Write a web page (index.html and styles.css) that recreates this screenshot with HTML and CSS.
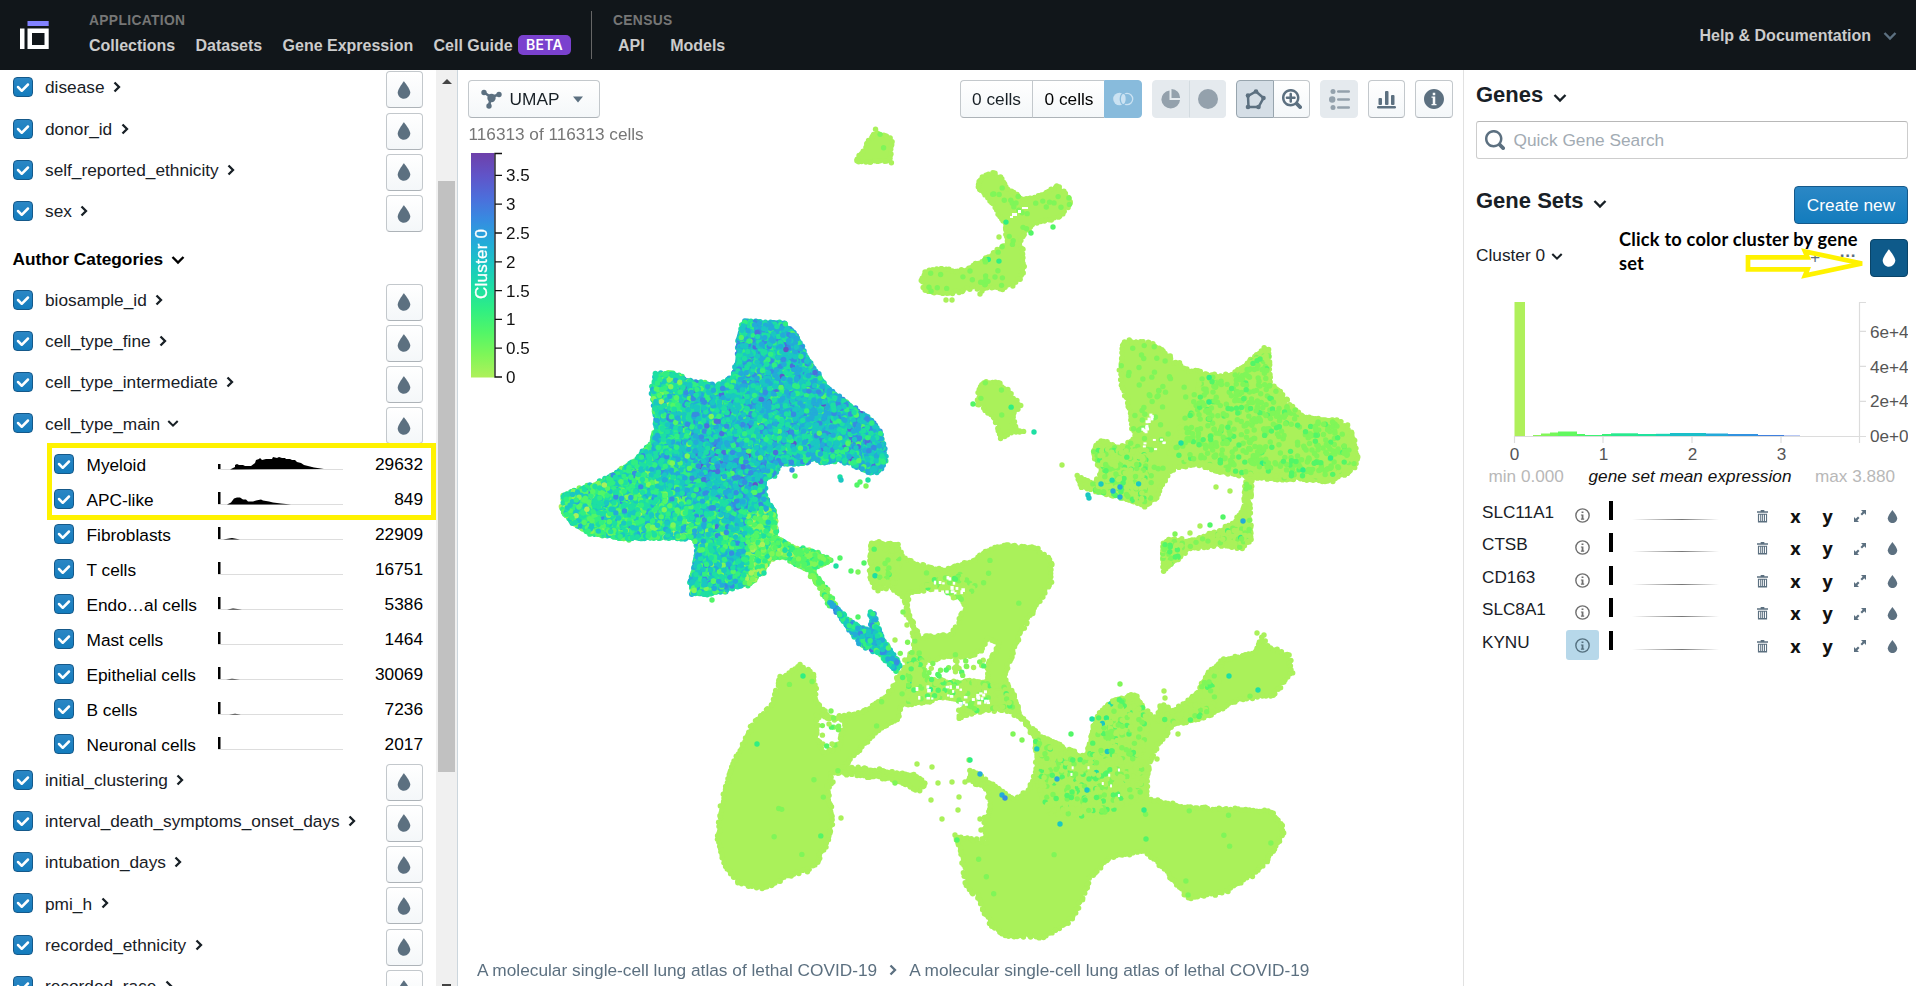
FILE: index.html
```html
<!DOCTYPE html>
<html lang="en">
<head>
<meta charset="utf-8">
<title>Cell explorer</title>
<link rel="stylesheet" href="styles.css">
</head>
<body>
<svg class="defs" aria-hidden="true">
  <symbol id="drop" viewBox="0 0 16 16"><path d="M7.88 1s-4.9 6.28-4.9 8.9c.01 2.82 2.34 5.1 4.99 5.1 2.65-.01 5.03-2.3 5.03-5.13C12.99 7.17 7.88 1 7.88 1z"/></symbol>
  <symbol id="tick" viewBox="0 0 16 16"><path d="M12 5c-.28 0-.53.11-.71.29L7 9.59l-2.29-2.3a1.003 1.003 0 00-1.42 1.42l3 3c.18.18.43.29.71.29s.53-.11.71-.29l5-5A1.003 1.003 0 0012 5z"/></symbol>
  <symbol id="right" viewBox="0 0 8 12"><path d="M1.5 1.5L6 6L1.5 10.5" fill="none" stroke="currentColor" stroke-width="2.3"/></symbol>
  <symbol id="down" viewBox="0 0 14 10"><path d="M1.5 2L7 7.5L12.500 2" fill="none" stroke="currentColor" stroke-width="2.4"/></symbol>
  <symbol id="lens" viewBox="0 0 16 16"><path d="M15.55 13.43l-2.67-2.68a6.94 6.94 0 001.11-3.76c0-3.87-3.13-7-7-7s-7 3.13-7 7 3.13 7 7 7c1.390 0 2.680-.42 3.760-1.110l2.680 2.670a1.498 1.498 0 102.120-2.120zm-8.560-1.440c-2.760 0-5-2.240-5-5s2.240-5 5-5 5 2.240 5 5-2.240 5-5 5z"/></symbol>
  <symbol id="info" viewBox="0 0 16 16"><circle cx="8" cy="8" r="7.1" fill="none" stroke="currentColor" stroke-width="1.5"/><path d="M7 3.600h2v1.700H7zM6.300 6.800H9v4.400h.8v1.200H6.300v-1.200h.8V8h-.8z"/></symbol>
  <symbol id="trash" viewBox="0 0 12 14"><path d="M4 0h4v1.300h4v1.500H0V1.300h4zM1 4h10v9.500H1zM2.300 5v7h1.200V5zM4.700 5v7h.9V5zM6.700 5v7h.9V5zM8.700 5v7h1.100V5z" fill-rule="evenodd"/></symbol>
  <symbol id="expand" viewBox="0 0 12 12"><path d="M7 0h5v5l-1.700-1.700L8 5.500 6.500 4l2.200-2.300zM5 12H0V7l1.700 1.700L4 6.500 5.500 8l-2.200 2.300z"/></symbol>
</svg>

<header class="topbar">
  <svg class="logo" width="29" height="28" viewBox="0 0 29 28"><path d="M7.500 0h21.200v5H7.500z" fill="#8282ff"/><path d="M0 7.500h4.500V28H0zM7.500 7.500h21.200V28H7.500zM12 12v12h12.500V12z" fill="#fff" fill-rule="evenodd"/></svg>
  <div class="navgroup">
    <div class="navtitle">APPLICATION</div>
    <nav class="nav"><a>Collections</a><a>Datasets</a><a>Gene Expression</a><a class="guide">Cell Guide</a><span class="beta">BETA</span></nav>
  </div>
  <div class="navgroup census">
    <div class="navtitle">CENSUS</div>
    <nav class="nav"><a>API</a><a>Models</a></nav>
  </div>
  <div class="help">Help &amp; Documentation<svg width="14" height="10"><use href="#down"/></svg></div>
</header>

<div class="body">
<aside class="left">
  <div class="cats">
    <div class="cat"><i class="box"><svg><use href="#tick"/></svg></i><b>disease</b><svg class="chev"><use href="#right"/></svg><span class="btn paint"><svg><use href="#drop"/></svg></span></div>
    <div class="cat"><i class="box"><svg><use href="#tick"/></svg></i><b>donor_id</b><svg class="chev"><use href="#right"/></svg><span class="btn paint"><svg><use href="#drop"/></svg></span></div>
    <div class="cat"><i class="box"><svg><use href="#tick"/></svg></i><b>self_reported_ethnicity</b><svg class="chev"><use href="#right"/></svg><span class="btn paint"><svg><use href="#drop"/></svg></span></div>
    <div class="cat"><i class="box"><svg><use href="#tick"/></svg></i><b>sex</b><svg class="chev"><use href="#right"/></svg><span class="btn paint"><svg><use href="#drop"/></svg></span></div>
    <h3>Author Categories<svg width="14" height="10"><use href="#down"/></svg></h3>
    <div class="cat"><i class="box"><svg><use href="#tick"/></svg></i><b>biosample_id</b><svg class="chev"><use href="#right"/></svg><span class="btn paint"><svg><use href="#drop"/></svg></span></div>
    <div class="cat"><i class="box"><svg><use href="#tick"/></svg></i><b>cell_type_fine</b><svg class="chev"><use href="#right"/></svg><span class="btn paint"><svg><use href="#drop"/></svg></span></div>
    <div class="cat"><i class="box"><svg><use href="#tick"/></svg></i><b>cell_type_intermediate</b><svg class="chev"><use href="#right"/></svg><span class="btn paint"><svg><use href="#drop"/></svg></span></div>
    <div class="cat"><i class="box"><svg><use href="#tick"/></svg></i><b>cell_type_main</b><svg class="chev open"><use href="#down"/></svg><span class="btn paint"><svg><use href="#drop"/></svg></span></div>
    <div class="values">
      <div class="val"><i class="box"><svg><use href="#tick"/></svg></i><span class="name">Myeloid</span><svg class="mini" viewBox="0 0 125 15"><path class="axis" d="M0 14.500H125"/><path d="M0 9h2.500v5H0zM12 14.500L17 12V10l2-1 2 1h4l2 1 6 0 4-3 1-3 3-1 1-1 2 2 4-1 6 0 1-2 4 1 2-1 3 1h3l1 1h4l2 1h3l2 2 4 1 3 2 4 1 6 1.500 10 1.500z"/></svg><span class="count">29632</span></div>
      <div class="val"><i class="box"><svg><use href="#tick"/></svg></i><span class="name">APC-like</span><svg class="mini" viewBox="0 0 125 15"><path class="axis" d="M0 14.500H125"/><path d="M0 2h2.500v12H0zM9 14.500l4-2 3-4 3-1 3 0 3 2h3l2 2 5 0 3-1 5-1 2 1 6 1 4 1 8 1 10 1z"/></svg><span class="count">849</span></div>
      <div class="val"><i class="box"><svg><use href="#tick"/></svg></i><span class="name">Fibroblasts</span><svg class="mini" viewBox="0 0 125 15"><path class="axis" d="M0 14.500H125"/><path d="M0 2h2.500v12H0zM5 14.500L14 13l8 1.500z"/></svg><span class="count">22909</span></div>
      <div class="val"><i class="box"><svg><use href="#tick"/></svg></i><span class="name">T cells</span><svg class="mini" viewBox="0 0 125 15"><path class="axis" d="M0 14.500H125"/><path d="M0 2h2.500v12H0z"/></svg><span class="count">16751</span></div>
      <div class="val"><i class="box"><svg><use href="#tick"/></svg></i><span class="name">Endo…al cells</span><svg class="mini" viewBox="0 0 125 15"><path class="axis" d="M0 14.500H125"/><path d="M0 2h2.500v12H0zM9 14.500L15 13.500l9 1z"/></svg><span class="count">5386</span></div>
      <div class="val"><i class="box"><svg><use href="#tick"/></svg></i><span class="name">Mast cells</span><svg class="mini" viewBox="0 0 125 15"><path class="axis" d="M0 14.500H125"/><path d="M0 2h2.500v12H0z"/></svg><span class="count">1464</span></div>
      <div class="val"><i class="box"><svg><use href="#tick"/></svg></i><span class="name">Epithelial cells</span><svg class="mini" viewBox="0 0 125 15"><path class="axis" d="M0 14.500H125"/><path d="M0 2h2.500v12H0zM8 14.500L14 13.800l8 .7z"/></svg><span class="count">30069</span></div>
      <div class="val"><i class="box"><svg><use href="#tick"/></svg></i><span class="name">B cells</span><svg class="mini" viewBox="0 0 125 15"><path class="axis" d="M0 14.500H125"/><path d="M0 2h2.500v12H0zM11 14.500L17 13.700l6 .8z"/></svg><span class="count">7236</span></div>
      <div class="val"><i class="box"><svg><use href="#tick"/></svg></i><span class="name">Neuronal cells</span><svg class="mini" viewBox="0 0 125 15"><path class="axis" d="M0 14.500H125"/><path d="M0 2h2.500v12H0z"/></svg><span class="count">2017</span></div>
      <div class="highlight"></div>
    </div>
    <div class="cat"><i class="box"><svg><use href="#tick"/></svg></i><b>initial_clustering</b><svg class="chev"><use href="#right"/></svg><span class="btn paint"><svg><use href="#drop"/></svg></span></div>
    <div class="cat"><i class="box"><svg><use href="#tick"/></svg></i><b>interval_death_symptoms_onset_days</b><svg class="chev"><use href="#right"/></svg><span class="btn paint"><svg><use href="#drop"/></svg></span></div>
    <div class="cat"><i class="box"><svg><use href="#tick"/></svg></i><b>intubation_days</b><svg class="chev"><use href="#right"/></svg><span class="btn paint"><svg><use href="#drop"/></svg></span></div>
    <div class="cat"><i class="box"><svg><use href="#tick"/></svg></i><b>pmi_h</b><svg class="chev"><use href="#right"/></svg><span class="btn paint"><svg><use href="#drop"/></svg></span></div>
    <div class="cat"><i class="box"><svg><use href="#tick"/></svg></i><b>recorded_ethnicity</b><svg class="chev"><use href="#right"/></svg><span class="btn paint"><svg><use href="#drop"/></svg></span></div>
    <div class="cat"><i class="box"><svg><use href="#tick"/></svg></i><b>recorded_race</b><svg class="chev"><use href="#right"/></svg><span class="btn paint"><svg><use href="#drop"/></svg></span></div>
  </div>
  <div class="scroll"><span class="up"></span><span class="thumb"></span><span class="dn"></span></div>
</aside>

<main class="center">
  <canvas id="plot" width="1004" height="916"></canvas>
  <div class="tools">
    <div class="btn umap"><svg width="21" height="20" viewBox="0 0 21 20"><path d="M3 3.500L10 8l8-2.500M10 8l-2 9" stroke="#5c7080" stroke-width="2.600" fill="none"/><g fill="#5c7080"><circle cx="3" cy="3.500" r="2.700"/><circle cx="18" cy="5.500" r="2.700"/><circle cx="10.500" cy="9" r="4.200"/><circle cx="8" cy="17" r="2.700"/></g></svg><span>UMAP</span><svg class="caret" width="10" height="7" viewBox="0 0 10 7"><path d="M0 .5h10L5 6.500z" fill="#5c7080"/></svg></div>
    <div class="toolset">
      <div class="group"><span class="btn cells">0 cells</span><span class="btn cells two">0 cells</span><span class="btn diff"><svg width="21" height="14" viewBox="0 0 21 14"><circle cx="6.500" cy="7" r="6.300" fill="#cbe2f2"/><circle cx="14" cy="7" r="5.700" fill="none" stroke="#cbe2f2" stroke-width="1.300"/><ellipse cx="10.300" cy="7" rx="3" ry="5.700" fill="#cbe2f2" stroke="#88bbdc" stroke-width="1.300"/></svg></span></div>
      <div class="group"><span class="btn off"><svg width="20" height="20" viewBox="0 0 20 20"><path d="M8.500 1.500V11H19A9.300 9 0 1 1 8.500 1.500zM10.500 0A8.800 8.500 0 0 1 19 9H10.500z"/></svg></span><span class="btn off"><svg width="20" height="20"><circle cx="10" cy="10" r="10"/></svg></span></div>
      <div class="group"><span class="btn on"><svg width="21" height="21" viewBox="0 0 21 21"><path d="M11 2.500L18.500 9 13.500 18H3.500L3 7z" fill="none" stroke="#5c7080" stroke-width="2.500"/><g><circle cx="11" cy="2.500" r="2.300"/><circle cx="18.500" cy="9" r="2.300"/><circle cx="13.500" cy="18" r="2.300"/><circle cx="3" cy="18" r="2.300"/><circle cx="3" cy="6.500" r="2.300"/></g></svg></span><span class="btn joined"><svg width="20" height="20" viewBox="0 0 16 16"><use href="#lens"/><path d="M7.990 5.990v-2c0-.55-.45-1-1-1s-1 .45-1 1v2h-2c-.55 0-1 .45-1 1s.45 1 1 1h2v2c0 .55.450 1 1 1s1-.45 1-1v-2h2c.55 0 1-.45 1-1s-.45-1-1-1h-2z"/></svg></span></div>
      <div class="group"><span class="btn off wide"><svg width="21" height="21" viewBox="0 0 21 21"><circle cx="4" cy="2.500" r="2.500"/><circle cx="3.200" cy="10.500" r="3.200"/><circle cx="4" cy="18.500" r="2.500"/><rect x="8" y="1.300" width="13" height="2.500" rx="1.200"/><rect x="8" y="9.300" width="13" height="2.500" rx="1.200"/><rect x="8" y="17.300" width="13" height="2.500" rx="1.200"/></svg></span></div>
      <div class="group"><span class="btn"><svg width="19" height="19" viewBox="0 0 19 19"><rect x="0" y="16" width="19" height="2.500" rx="1.200"/><rect x="1.500" y="8" width="3.500" height="7" rx="1"/><rect x="8" y="1" width="3.500" height="14" rx="1"/><rect x="14" y="5" width="3.500" height="10" rx="1"/></svg></span></div>
      <div class="group"><span class="btn wide"><svg width="20" height="20" viewBox="0 0 16 16"><path d="M8 0C3.580 0 0 3.580 0 8s3.580 8 8 8 8-3.580 8-8-3.580-8-8-8zM7 3h2v2H7V3zm3 10H6v-1h1V7H6V6h3v6h1v1z"/></svg></span></div>
    </div>
  </div>
  <div class="total">116313 of 116313 cells</div>
  <svg class="legend" width="80" height="246" viewBox="0 0 80 246">
    <defs><linearGradient id="cool" x1="0" y1="0" x2="0" y2="1"><stop offset="0" stop-color="#6e40aa"/><stop offset=".1" stop-color="#6054c8"/><stop offset=".2" stop-color="#4c6edb"/><stop offset=".3" stop-color="#368ce1"/><stop offset=".4" stop-color="#23abd8"/><stop offset=".5" stop-color="#1ac7c2"/><stop offset=".6" stop-color="#1ddfa3"/><stop offset=".7" stop-color="#30ef82"/><stop offset=".8" stop-color="#52f667"/><stop offset=".9" stop-color="#7ff658"/><stop offset="1" stop-color="#aff05b"/></linearGradient></defs>
    <rect x="0" y="10" width="23.500" height="224.500" fill="url(#cool)"/>
    <path d="M31 10.500H24V234H31M24 32.300h7M24 61.100h7M24 90h7M24 118.800h7M24 147.600h7M24 176.400h7M24 205.200h7" fill="none" stroke="#111" stroke-width="1.300"/>
    <text x="35" y="38">3.5</text><text x="35" y="67">3</text><text x="35" y="96">2.5</text><text x="35" y="124.500">2</text><text x="35" y="153.500">1.5</text><text x="35" y="182">1</text><text x="35" y="211">0.5</text><text x="35" y="240">0</text>
    <text class="ltitle" transform="translate(16 156) rotate(-90)" textLength="70">Cluster 0</text>
  </svg>
  <footer class="crumbs"><span>A molecular single-cell lung atlas of lethal COVID-19</span><svg class="chev"><use href="#right"/></svg><span>A molecular single-cell lung atlas of lethal COVID-19</span></footer>
</main>

<aside class="right">
  <h2>Genes<svg width="14" height="10"><use href="#down"/></svg></h2>
  <div class="search"><svg width="20" height="20"><use href="#lens"/></svg>Quick Gene Search</div>
  <div class="sets"><h2>Gene Sets<svg width="14" height="10"><use href="#down"/></svg></h2><span class="create">Create new</span></div>
  <div class="cluster"><span>Cluster 0</span><svg class="chev open"><use href="#down"/></svg><span class="more">+</span><span class="dots">…</span><span class="paintset"><svg width="20" height="20"><use href="#drop"/></svg></span>
    <div class="note">Click to color cluster by gene set</div>
    <svg class="arrow" width="124" height="34" viewBox="0 0 124 34"><path d="M4 11.300H63.500L61 5.500 118 17.500 61 29.500 63.500 23.300H4z" fill="none" stroke="#fff200" stroke-width="4.700"/></svg>
  </div>
  <svg class="hist" width="432" height="192" viewBox="0 0 432 192">
    <path d="M38.500 6h10.500v134H38.500z" fill="#aff05b"/>
    <g><path d="M57 139h9v1h-9z" fill="#8cf55a"/><path d="M65 137.500h9v2.500h-9z" fill="#83f659"/><path d="M74 136.500h9v3.500h-9z" fill="#75f75a"/><path d="M82 135.500h19v4.500H82z" fill="#62f85f"/><path d="M101 138h8v2h-8z" fill="#50f667"/><path d="M109 139h26v1h-26z" fill="#3ff374"/><path d="M126 138h10v2h-10z" fill="#38f17a"/><path d="M135 137.300h27v2.700h-27z" fill="#28e98e"/><path d="M162 138h18v2h-18z" fill="#20e29d"/><path d="M180 137.800h18v2.200h-18z" fill="#1bd4b3"/><path d="M194 137h36v3h-36z" fill="#1bbfc9"/><path d="M230 137.500h22v2.500h-22z" fill="#24a9d9"/><path d="M252 138h30v2h-30z" fill="#3292e0"/><path d="M282 139h26v1h-26z" fill="#3f80df"/><path d="M308 139.500h16v.5h-16z" fill="#7091e8"/></g>
    <path d="M38.500 147v-6.500H383.500M390 6.500h-6.500V147M127 140.500v6.500M216 140.500v6.500M305 140.500v6.500M383.500 35.300h6.500M383.500 70.300h6.500M383.500 105.300h6.500M383.500 140.500h6.500" fill="none" stroke="#dcdcdc" stroke-width="1.200"/>
    <g class="ticks"><text x="394" y="41.500">6e+4</text><text x="394" y="76.500">4e+4</text><text x="394" y="110.500">2e+4</text><text x="394" y="145.500">0e+0</text><g text-anchor="middle"><text x="38.500" y="163.500">0</text><text x="127.500" y="163.500">1</text><text x="216.500" y="163.500">2</text><text x="305.500" y="163.500">3</text></g></g>
    <text x="12.500" y="185.500" fill="#b8b8b8">min 0.000</text><text x="112.500" y="185.500" font-style="italic" fill="#111" textLength="203">gene set mean expression</text><text x="339" y="185.500" fill="#b8b8b8">max 3.880</text>
  </svg>
  <div class="genes">
    <div class="gene"><span class="sym">SLC11A1</span><span class="info"><svg><use href="#info"/></svg></span><span class="spark"></span><svg class="trash"><use href="#trash"/></svg><b>x</b><b>y</b><svg class="expand"><use href="#expand"/></svg><svg class="sdrop"><use href="#drop"/></svg></div>
    <div class="gene"><span class="sym">CTSB</span><span class="info"><svg><use href="#info"/></svg></span><span class="spark"></span><svg class="trash"><use href="#trash"/></svg><b>x</b><b>y</b><svg class="expand"><use href="#expand"/></svg><svg class="sdrop"><use href="#drop"/></svg></div>
    <div class="gene"><span class="sym">CD163</span><span class="info"><svg><use href="#info"/></svg></span><span class="spark"></span><svg class="trash"><use href="#trash"/></svg><b>x</b><b>y</b><svg class="expand"><use href="#expand"/></svg><svg class="sdrop"><use href="#drop"/></svg></div>
    <div class="gene"><span class="sym">SLC8A1</span><span class="info"><svg><use href="#info"/></svg></span><span class="spark"></span><svg class="trash"><use href="#trash"/></svg><b>x</b><b>y</b><svg class="expand"><use href="#expand"/></svg><svg class="sdrop"><use href="#drop"/></svg></div>
    <div class="gene"><span class="sym">KYNU</span><span class="info active"><svg><use href="#info"/></svg></span><span class="spark"></span><svg class="trash"><use href="#trash"/></svg><b>x</b><b>y</b><svg class="expand"><use href="#expand"/></svg><svg class="sdrop"><use href="#drop"/></svg></div>
  </div>
</aside>
</div>
<script src="plot.js"></script>
</body>
</html>
```
FILE: styles.css
```css
* { box-sizing: border-box; }
body { margin: 0; height: 986px; overflow: hidden; background: #fff; color: #182026; font: 17.280px/22px "Liberation Sans", Arial, sans-serif; }
svg { display: block; flex: none; fill: currentColor; }
.defs { position: absolute; width: 0; height: 0; }

.topbar { height: 70px; background: #11161a; display: flex; align-items: flex-start; color: #ccc; font-weight: bold; }
.logo { margin: 21px 0 0 20px; width: 29px; height: 28px; }
.navgroup { height: 48px; margin: 11px 0 0 40px; padding-right: 20px; border-right: 1px solid #666; }
.navgroup.census { margin-left: 21px; border: 0; }
.navtitle { font-size: 13.8px; line-height: 18px; color: #767676; letter-spacing: .35px; margin-top: 1px; white-space: nowrap; }
.nav { display: flex; align-items: center; font-size: 16px; height: 24px; margin-top: 4px; gap: 20.300px; white-space: nowrap; }
.census .nav { padding-left: 5px; gap: 25.500px; }
.guide { margin-right: -15px; }
.beta { background: #7a41ce; color: #fff; border-radius: 5px; width: 53px; height: 20px; font: 600 14px/20px Inter, sans-serif; letter-spacing: .3px; text-align: center; margin-top: -2px; }
.help { margin: 25px 19px 0 auto; font-size: 16px; display: flex; align-items: center; gap: 12px; white-space: nowrap; }
.help svg { color: #5c7080; }

.body { display: flex; height: 916px; }
.left { width: 458px; border-right: 1px solid #ccd6dd; display: flex; overflow: hidden; }
.cats { width: 436px; padding: 1.200px 13px 0; flex: none; }
.cat { height: 41.330px; display: flex; align-items: flex-start; white-space: nowrap; }
.cat b { font-weight: normal; margin: 5.300px 8.500px 0 12px; }
.box { width: 20px; height: 20px; flex: none; margin-top: 6px; border: 1px solid #15598a; border-radius: 4px; background: linear-gradient(#2b87c5, #137cbd); color: #fff; display: block; }
.box svg { width: 20px; height: 20px; margin: -1px; }
.chev { width: 8px; height: 12px; margin-top: 10px; }
.chev.open { width: 12px; height: 9px; margin: 12px 0 0 -2px; }
.btn { display: flex; align-items: center; justify-content: center; border: 1px solid #c3c8cc; border-bottom-color: #adb3b8; border-radius: 4px; background: linear-gradient(#fff, #f4f7f9); width: 37px; height: 38px; }
.paint { margin-left: auto; flex: none; width: 37px; height: 37px; color: #5c7080; }
.paint svg { width: 20px; height: 20px; margin-right: 1px; }
.left h3 { margin: 0; height: 47px; padding-top: 11px; font-size: 17.280px; line-height: 22px; color: #000; display: flex; gap: 8px; margin-left: -.5px; }
.left h3 svg { margin-top: 7px; }
.values { position: relative; height: 314.700px; padding-left: 41px; }
.val { height: 35px; display: flex; align-items: flex-start; color: #000; }
.val .box { margin-top: 5px; }
.name { width: 144px; padding: 5px 0 0 12.500px; white-space: nowrap; }
.mini { width: 125px; height: 15px; margin-top: 6px; }
.axis { stroke: #ddd; }
.count { margin: 4px 0 0 auto; }
.highlight { position: absolute; left: 34px; top: -6px; width: 389px; height: 77px; border: 5px solid #fff200; }
.scroll { width: 21px; background: #f0f0f0; flex: none; display: flex; flex-direction: column; align-items: center; height: 916px; }
.up { border: 5px solid transparent; border-top: 0; border-bottom: 5px solid #444; margin-top: 9px; }
.thumb { width: 17px; height: 591px; background: #c1c1c1; margin-top: 97px; }
.dn { width: 9px; height: 2px; background: #444; margin-top: auto; }

.center { width: 1005px; position: relative; display: flex; flex-direction: column; flex: none; padding: 10px 10px 0; }
#plot { position: absolute; left: 0; top: 0; }
.tools, .total, .legend, .crumbs { position: relative; }
.tools { display: flex; justify-content: space-between; }
.umap { width: 132px; padding: 0 4px 0 0; gap: 7.500px; }
.umap span { margin-top: -1px; }
.umap .caret { margin-left: 6px; }
.toolset { display: flex; gap: 10px; color: #5c7080; }
.group { display: flex; }
.group .btn:not(:last-child) { border-top-right-radius: 0; border-bottom-right-radius: 0; }
.group .btn:not(:first-child) { border-top-left-radius: 0; border-bottom-left-radius: 0; }
.btn.cells { width: 72px; border-right: 0; color: #182026; }
.btn.two { color: #000; padding-left: 1px; }
.btn.diff { width: 38px; background: #88bbdc; border-color: #88bbdc; }
.btn.off { background: #e5eaee; border-color: #e5eaee; color: #94a1ac; }
.btn.off + .off { border-left-color: #d3dbe0; }
.btn.on { width: 38px; background: #d5dee6; border-color: #98a5ae; }
.btn.joined { width: 36px; border-left: 0; }
.btn.wide { width: 38px; }
.total { color: #767676; font-size: 17.200px; margin: 5px 0 0 .5px; }
.legend { margin: -2px 0 0 3px; font-size: 17px; fill: #111; }
.ltitle { fill: #fff; stroke: #fff; stroke-width: .3px; }
.crumbs { margin-top: auto; padding: 0 0 5.500px 9px; display: flex; gap: 12px; color: #5c7080; }
.crumbs .chev { margin-top: 5px; }

.right { flex: 1; border-left: 1px solid #e1e1e1; padding: 13px 8px 0 12px; overflow: hidden; }
h2 { margin: 0; font-size: 22px; line-height: 24px; display: flex; gap: 9.500px; white-space: nowrap; }
h2 svg { margin-top: 10px; }
.search { height: 38px; margin-top: 14px; border: 1px solid #cdcdcd; border-top-color: #b8b8b8; border-radius: 3px; color: #a2abb3; display: flex; align-items: center; gap: 8.500px; padding-left: 8px; }
.search svg { color: #5c7080; }
.sets { display: flex; justify-content: space-between; margin-top: 27px; }
.sets h2 { padding-top: 3px; }
.create { width: 114px; height: 38px; border: 1px solid #15598a; border-radius: 4px; background: linear-gradient(#2b87c5, #137cbd); color: #fff; line-height: 36px; text-align: center; white-space: nowrap; }
.cluster { position: relative; display: flex; height: 63px; padding-top: 15px; }
.cluster > span:first-child { padding-top: 5px; width: 77px; white-space: nowrap; }
.cluster .chev { margin-top: 13px; }
.more { margin: 7px 0 0 247px; color: #5c7080; }
.dots { margin: 1px 0 0 19px; color: #5c7080; font-weight: bold; }
.paintset { margin-left: auto; width: 38px; height: 38px; flex: none; background: #0e5a8a; border: 1px solid #0a4468; border-radius: 4px; color: #fff; display: flex; align-items: center; justify-content: center; }
.note { position: absolute; left: 143px; top: 3px; width: 252px; color: #000; font: bold 18.200px/24px Lato, sans-serif; letter-spacing: .22px; }
.arrow { position: absolute; left: 268px; top: 22px; }
.hist { margin-top: 9px; font-size: 17.150px; }
.ticks { fill: #555; }
.genes { padding: 8px 0 0 6px; }
.gene { height: 32.500px; display: flex; align-items: flex-start; color: #5c7080; }
.sym { width: 84px; color: #182026; font-size: 17.150px; line-height: 20px; padding-top: 5.800px; }
.info { width: 33px; height: 30px; margin-top: 4px; display: flex; align-items: center; justify-content: center; color: #6f6f6f; border-radius: 3px; }
.info svg { width: 15px; height: 15px; }
.info.active { background: #b7d8ea; color: #54707f; }
.spark { width: 110px; height: 19px; margin: 4.500px 0 0 10px; border-left: 4px solid #000; background: linear-gradient(90deg, transparent 18%, #777 65%, transparent) bottom / 100% 1px no-repeat; }
.trash { width: 11px; height: 13px; margin: 13.500px 0 0 38px; }
.gene b { width: 13px; margin: 8.500px 0 0 19px; text-align: center; color: #111; font: bold 18px/22px "Open Sans", sans-serif; }
.trash + b { margin-left: 21px; }
.expand { width: 12px; height: 12px; margin: 14px 0 0 20px; }
.sdrop { width: 15px; height: 15px; margin: 12.500px 0 0 19px; }
```
FILE: plot.js
```js
const canvas = document.getElementById('plot');
const ctx = canvas.getContext('2d');
ctx.translate(-458, -70);

// Deterministic generator keeps the embedding stable between loads.
let seed = 20417;
function rnd() {
  seed = (seed + 0x6D2B79F5) | 0;
  let t = Math.imul(seed ^ (seed >>> 15), 1 | seed);
  t = (t + Math.imul(t ^ (t >>> 7), 61 | t)) ^ t;
  return ((t ^ (t >>> 14)) >>> 0) / 4294967296;
}
const gauss = () => rnd() + rnd() + rnd() + rnd() - 2;

const ramp = ['#aaf15a', '#7ff658', '#52f667', '#30ef82', '#1ddfa3', '#1ac7c2', '#23abd8', '#368ce1', '#4c6edb', '#6054c8', '#6e40aa'];
const colour = v => ramp[Math.max(0, Math.min(10, Math.round(v / 3.88 * 10)))];

function dot(x, y, v) {
  ctx.fillStyle = colour(v);
  ctx.beginPath();
  ctx.arc(x, y, 2.7, 0, 7);
  ctx.fill();
}

function parse(text, ox, oy, sx, sy) {
  const n = text.trim().split(/[\s,]+/).map(Number);
  const pts = [];
  for (let i = 0; i < n.length; i += 2) pts.push([ox + n[i] / sx, oy + n[i + 1] / sy]);
  return pts;
}

// Pull a ring inward by d pixels so the rim dots stay within the outline.
function inset(ring, d) {
  let area = 0;
  ring.forEach(([x, y], i) => {
    const [u, w] = ring[(i + 1) % ring.length];
    area += x * w - u * y;
  });
  const s = area > 0 ? d : -d;
  return ring.map(([x, y], i) => {
    const [a, b] = ring[(i + ring.length - 1) % ring.length];
    const [u, w] = ring[(i + 1) % ring.length];
    const l = Math.hypot(u - a, w - b) || 1;
    return [x - (w - b) / l * s, y + (u - a) / l * s];
  });
}

// rings: outline followed by holes; value(x, y) gives expression.
function region(rings, solid, density, value, rim) {
  const path = new Path2D();
  let x0 = 1e9, y0 = 1e9, x1 = 0, y1 = 0;
  for (const ring of rings) {
    ring.forEach(([x, y], i) => {
      i ? path.lineTo(x, y) : path.moveTo(x, y);
      x0 = Math.min(x0, x); x1 = Math.max(x1, x);
      y0 = Math.min(y0, y); y1 = Math.max(y1, y);
    });
    path.closePath();
  }
  if (solid) { ctx.fillStyle = colour(solid - 1); ctx.fill(path, 'evenodd'); }
  for (const ring of rings) {
    ring.forEach(([x, y], i) => {
      const [u, w] = ring[(i + 1) % ring.length];
      const steps = Math.max(1, Math.round(Math.hypot(u - x, w - y) / 3));
      for (let k = 0; k < steps; k++) {
        const px = x + (u - x) * k / steps + gauss() * 1.3;
        const py = y + (w - y) * k / steps + gauss() * 1.3;
        dot(px, py, rim ? value(px, py) : 0);
      }
    });
  }
  const total = (x1 - x0) * (y1 - y0) * density;
  ctx.save();
  ctx.setTransform(1, 0, 0, 1, 0, 0);
  const hits = [];
  for (let i = 0; i < total; i++) {
    const x = x0 + rnd() * (x1 - x0), y = y0 + rnd() * (y1 - y0);
    if (ctx.isPointInPath(path, x, y, 'evenodd')) hits.push([x, y]);
  }
  ctx.restore();
  for (const [x, y] of hits) dot(x, y, value(x, y));
}

const A = [540, 300, 3, 3], B = [1050, 320, 3, 3], C = [840, 110, 3, 3], D = [700, 520, 2.529, 3];
const low = () => rnd() < .92 ? .3 + rnd() * .2 : .8 + rnd() * .6;
const mix = () => rnd() < .6 ? 0 : rnd() < .96 ? .3 + rnd() * .45 : .9 + rnd() * 1.1;

// Large lower group with its bridges.
region([
  inset(parse(`430,65 500,68 515,105 555,130 620,145 680,120 735,80 790,70 850,75 895,125 890,190 855,260 820,330
    795,400 775,470 800,530 815,590 860,640 920,675 975,710 985,640 1000,590 1040,540 1100,520 1125,560 1150,590
    1170,550 1200,570 1250,520 1285,450 1330,415 1400,390 1418,350 1440,375 1495,405 1500,460 1450,530 1360,545
    1290,590 1200,620 1160,680 1140,740 1130,830 1220,855 1370,865 1445,870 1478,910 1478,950 1440,1020 1405,1065
    1330,1120 1235,1140 1190,1080 1145,1020 1120,1000 1040,1015 990,1080 970,1140 945,1200 870,1255 770,1255
    730,1215 695,1130 668,1095 660,1010 645,945 720,960 715,900 730,860 720,810 675,785 685,745 730,780 800,835
    830,800 850,740 845,660 815,600 770,575 700,580 655,600 650,570 690,550 610,535 590,550 515,560 500,600
    440,650 400,700 365,735 490,750 545,760 575,790 555,815 490,785 400,770 335,765 330,820 340,900 330,960
    300,1030 270,1060 215,1075 165,1112 95,1095 60,1040 40,960 50,850 80,730 130,610 180,550 200,470 250,432
    290,455 298,540 330,590 400,575 470,525 495,470 540,400 535,320 510,240 480,200 445,215 425,170`, ...D), 2),
  inset(parse('530,225 590,212 650,215 665,260 635,335 590,345 560,345 530,280', ...D), -2.5),
  inset(parse('570,435 620,420 700,412 735,360 750,370 720,440 725,485 670,475 640,495 570,470', ...D), -2.5),
  inset(parse('302,590 330,600 365,600 350,670 315,695 300,650', ...D), -2)
], 1, .0006, low);
region([inset(parse('1000,590 1040,540 1100,520 1125,560 1140,620 1120,700 1130,830 1000,900 880,880 850,800 845,660 920,690 975,710', ...D), 2)], 0, .06, mix);
region([inset(parse('1150,600 1250,520 1285,450 1330,415 1300,590 1200,620', ...D), 3)], 0, .03, mix);
region([parse('530,400 560,420 570,480 700,490 770,500 790,560 700,570 620,525 525,545', ...D)], 0, .035, mix, true);
region([inset(parse('430,65 500,68 515,105 500,190 445,200 425,170', ...D), 3)], 0, .035, mix);
region([parse('660,165 695,200 670,235 640,230 620,205 560,200 600,180', ...D)], 0, .02, mix, true);
// Loose cells bridging the two gaps.
const scatter = (n, x, y, w, h) => { for (let i = 0; i < n; i++) dot(x + rnd() * w, y + rnd() * h, mix()); };
scatter(32, 926, 660, 58, 26);
scatter(14, 822, 715, 20, 32);
scatter(12, 900, 635, 20, 50);
// Small gaps where cells thin out.
ctx.fillStyle = '#fff';
for (let i = 0; i < 30; i++) ctx.fillRect(910 + rnd() * 80, 685 + rnd() * 20, 2 + rnd() * 2, 2 + rnd() * 2);
for (let i = 0; i < 14; i++) ctx.fillRect(930 + rnd() * 34, 573 + rnd() * 18, 2 + rnd() * 2, 2 + rnd() * 2);
for (let i = 0; i < 8; i++) ctx.fillRect(1060 + rnd() * 80, 765 + rnd() * 30, 2, 3);

// Right group.
region([inset(parse(`220,60 300,60 350,95 375,120 420,145 520,163 565,150 600,115 640,82 662,90 665,180 690,225 720,260
  770,290 870,298 910,330 930,410 910,455 850,487 700,483 612,478 604,570 608,650 580,690 500,680 420,692 365,738
  335,755 335,665 375,650 410,660 500,630 550,605 575,560 585,470 500,462 450,440 375,447 345,490 325,535 285,562
  235,545 190,525 130,515 85,500 80,465 130,485 150,450 130,420 125,390 150,355 210,380 250,350 240,310 230,250
  210,200 205,150 210,90`, ...B), 2)], 1, .009, () => .3 + rnd() * .2);
region([inset(parse('450,160 520,165 600,120 655,100 665,180 770,290 870,298 925,400 850,480 620,475 500,455 350,400', ...B), 3)], 0, .03, () => rnd() < .96 ? .3 + rnd() * .35 : rnd() < .8 ? .8 : 1.2);
region([inset(parse('130,390 200,385 290,390 290,545 235,545 130,515 160,450', ...B), 2)], 0, .08, mix, true);
region([inset(parse('340,670 400,670 380,720 340,745', ...B), 1)], 0, .05, mix, true);
region([inset(parse('500,640 600,620 600,670 500,672', ...B), 1)], 0, .05, mix, true);
dot(1120, 487, 2.5); dot(1113, 491, 2.2); dot(1101, 484, 2); dot(1120, 497, 2.2); dot(1243, 521, 2.3); dot(1181, 443, 1.7);
ctx.fillStyle = '#fff';
for (let i = 0; i < 12; i++) ctx.fillRect(1141 + i % 5 * 2 + rnd() * 4, 427 - i % 5 * 4 + rnd() * 5, 3, 3);
for (let i = 0; i < 7; i++) ctx.fillRect(1142 + rnd() * 26, 434 + rnd() * 16, 3, 2);

// Small upper groups.
region([inset(parse('105,58 155,82 162,110 153,160 45,160 75,103', ...C), 2)], 1, .002, low);
region([inset(parse(`455,182 485,196 510,235 550,262 600,250 650,220 690,255 698,285 665,325 620,338 585,345 545,385
  557,440 555,490 525,530 480,542 400,540 330,555 290,555 250,545 238,512 255,478 300,468 370,478 430,445 497,395
  490,345 465,305 440,265 410,240 410,210`, ...C), 2)], 1, .01, low);
region([parse('430,815 475,818 510,850 540,888 518,905 520,945 546,970 505,967 485,985 475,960 465,925 415,880 414,850', ...C)], 1, .003, low);
ctx.fillStyle = '#fff';
[[1012, 213, 5, 3], [1018, 210, 3, 3], [1022, 207, 6, 2], [1010, 216, 3, 2]].forEach(r => ctx.fillRect(...r));

// Myeloid cells: values rise toward the upper right.
const myeloid = (x, y) => {
  let v = 1.62 + (x - 700) / 480 - (y - 450) / 420;
  v += .5 * Math.exp(-((x - 725) ** 2 + (y - 470) ** 2) / 2600);
  if (y > 550 && x < 745) v += .3;
  if (y > 510 && x > 745) v -= .75;
  if (x < 680 && y < 410) v -= .35;
  return v + gauss() * .9;
};
region([parse(`615,63 735,70 768,105 796,165 826,215 861,262 936,322 996,362 1022,400 1030,440 1035,480 1020,510
  990,520 935,490 890,480 850,490 820,473 790,490 725,492 700,525 672,540 675,590 700,630 707,665 708,710
  760,745 820,755 870,782 810,811 770,795 735,770 690,775 665,817 630,850 560,870 500,883 458,880 452,850
  463,790 473,745 460,712 250,716 150,700 105,675 68,635 68,588 105,570 170,553 230,518 280,488 333,432
  349,380 340,300 338,260 348,221 400,220 440,242 530,256 578,232 594,180 596,110`, ...A)], 2, .4, myeloid, true);
region([parse('770,755 820,757 868,780 810,809 775,795', ...A)], 0, .15, () => .4 + rnd() * .7, true);
region([parse('805,805 825,818 860,870 885,915 870,915 840,865 815,830', ...A)], 1, .12, () => .2 + rnd() * .8, true);
region([parse('870,905 920,955 975,990 1000,1000 990,938 1000,940 1025,1010 1080,1095 1065,1112 1010,1055 965,1035 925,985', ...A)], 3, .22, () => 1.75 + gauss() * .9, true);

// Isolated cells: x, y, value.
const strays = [[712,600,.7],[764,573,1.4],[795,476,.8],[840,477,1.6],[841,480,1.9],[860,482,.9],[866,486,.3],[857,485,.8],[868,480,1.5],[792,470,2.8],[840,558,.7],[836,566,1.5],[851,571,.6],[858,572,.2],[858,617,.9],[864,563,.7],[973,404,.8],[1034,432,1.4],[995,277,.5],[982,291,0],[952,300,0],[946,300,0],[980,294,0],[1031,233,.7],[1053,227,.7],[999,237,0],[1062,465,0],[1216,487,0],[1230,491,0],[1223,517,.6],[1200,526,0],[1210,525,.8],[1190,533,0],[1175,534,.4],[1089,498,1.9],[1088,495,1.9],[1013,734,.5],[1022,740,.3],[1071,734,.6],[1092,719,1.7],[969,760,0],[970,760,1.2],[895,783,.5],[841,818,0],[942,819,0],[958,810,0],[959,797,0],[917,764,0],[932,767,0],[938,783,0],[952,782,0],[965,782,0],[931,800,0],[955,835,0],[957,840,.7],[981,830,0],[980,819,0],[982,839,0],[1257,633,0],[1264,635,0],[1120,684,.3],[1164,691,0],[1165,698,0],[1160,706,0],[1178,734,0],[1157,759,0],[803,676,1],[757,744,1.3],[1057,779,2.3],[1060,824,2.1],[1087,790,2.1],[1229,676,1.4],[1258,690,1.4],[1144,810,1],[1146,839,.9],[1002,795,2.2],[1005,798,2.9],[980,774,2.2],[895,640,0],[903,612,.2],[907,625,0],[831,711,.2],[829,724,0],[832,744,0],[838,750,0],[833,782,0],[827,786,0],[1209,402,1.2],[1303,470,1.3]];
for (const [x, y, v] of strays) dot(x, y, v);
```
